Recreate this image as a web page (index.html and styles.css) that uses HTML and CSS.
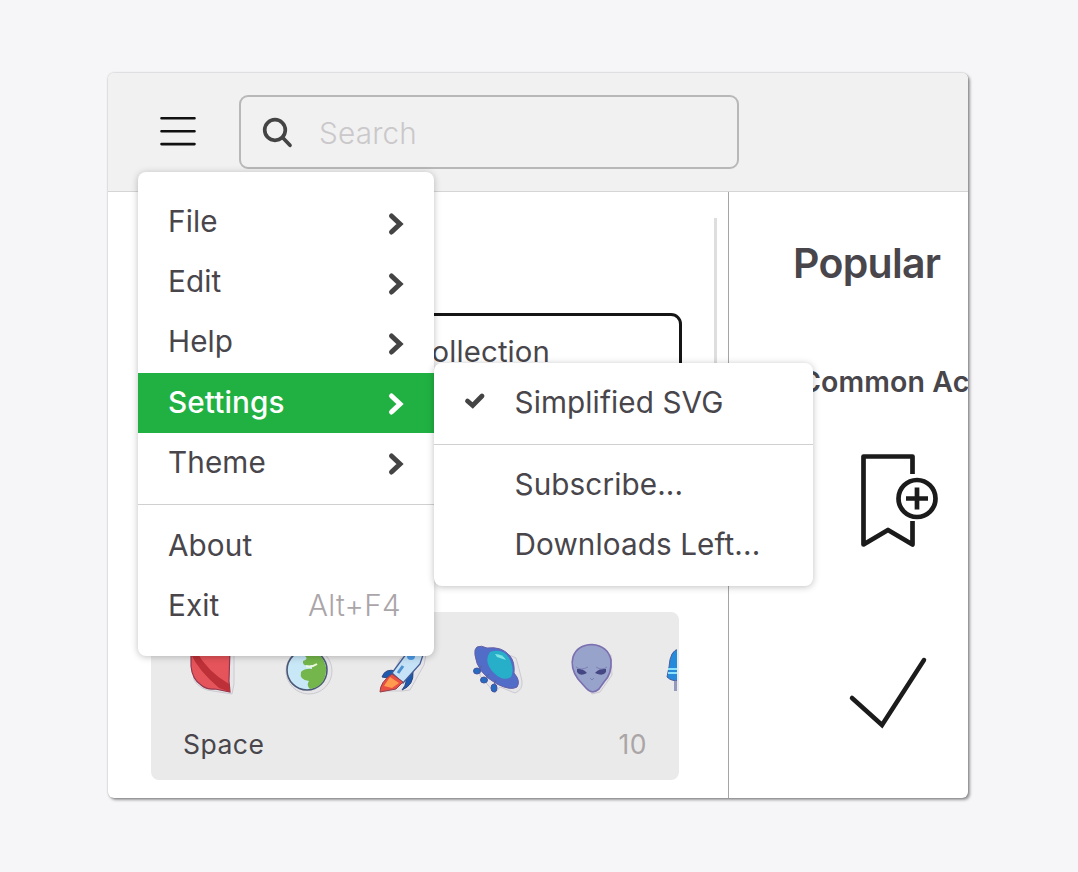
FILE: index.html
```html
<!DOCTYPE html>
<html lang="en">
<head>
<meta charset="utf-8">
<title>Icons</title>
<link rel="stylesheet" href="styles.css">
</head>
<body>
<div class="window">
  <header class="topbar">
    <svg class="burger" viewBox="0 0 36 30"><path d="M1.5 2.2h33M1.5 15.2h33M1.5 28.1h33"/></svg>
    <div class="search">
      <svg class="search-icon" viewBox="0 0 32 32"><circle cx="13" cy="14" r="10.3"/><path d="M20.8 21.800L28 29.300"/></svg>
      <span class="search-text">Search</span>
    </div>
  </header>
  <div class="body">
    <section class="left">
      <div class="collection"><span>Collection</span></div>
      <div class="card">
        <div class="stickers">
          <svg class="sticker" viewBox="0 0 56 56"><path class="halo" d="M8 6V38Q14 48 27 49L46 52L48 42V6Z"/><path d="M5 6V24Q6 37 15 43Q21 48 29 47L44 50L43 39L44 6Z" fill="#e5545a" stroke="#93364d" stroke-width="1.2"/><path d="M5 12Q12 28 33 46L44 50L43 42Q22 30 10 9Z" fill="#bd3038"/></svg>
          <svg class="sticker" viewBox="0 0 56 56"><circle class="halo" cx="28" cy="29" r="23"/><circle cx="26" cy="28" r="20" fill="#c8e8f8" stroke="#4c5877" stroke-width="1.6"/><path d="M20 9Q40 6 45 25Q46 44 29 47Q25 43 28 39Q18 38 20 30Q24 26 31 27L31 23Q21 25 22 19Q28 17 24 14Q18 13 20 9Z" fill="#74b64b"/><path d="M25 24Q30 26 36 22" fill="none" stroke="#edf9df" stroke-width="2"/></svg>
          <svg class="sticker" viewBox="0 0 56 56"><path class="halo" d="M7 49L23 17L51 3L47 23L33 48L25 49Z"/><path d="M19 29Q8 26 5 35L17 37ZM27 34Q32 39 25 48Q37 43 36 30Z" fill="#1d59ad" stroke="#2f477f"/><path d="M15 31L32 8L49 4L43 22L26 41Z" fill="#c5e2f7" stroke="#435c96" stroke-width="1.3"/><path d="M15 32L26 40L19 47L3 50Q3 40 15 32Z" fill="#e84e42" stroke="#953e4d"/><path d="M13 35L22 41L15 46L7 44Z" fill="#ff9a4e"/><circle cx="34" cy="14" r="4" fill="#4b9be7"/><path d="M21 31l5-7" stroke="#4c91d0" stroke-width="3"/></svg>
          <svg class="sticker" viewBox="0 0 56 56"><path class="halo" d="M8 7Q26 7 43 16Q46 26 49 39Q50 48 42 51L27 45L22 51L7 34Z"/><path d="M4 5Q8 3 14 6Q29 4 37 14Q42 20 41 31Q48 39 44 45Q38 49 24 42Q4 31 2 13Q1 7 4 5Z" fill="#526dc8" stroke="#655fa6"/><path d="M17 10Q30 6 36 16Q42 27 38 35Q30 40 21 31Q10 20 17 10Z" fill="#27afc9"/><path d="M22 12Q30 12 33 18L24 15Z" fill="#7ce5e3"/><g fill="#276bc0" stroke="#4453a0"><ellipse cx="4" cy="29" rx="3.5" ry="3"/><ellipse cx="11" cy="38" rx="3.5" ry="3"/><ellipse cx="21" cy="46" rx="3" ry="4"/></g><path d="M5 27l4-3M12 36l4-4M21 43l2-5" stroke="#5a6199"/></svg>
          <svg class="sticker" viewBox="0 0 56 56"><path class="halo" d="M12 8L42 13L43 33L31 50L23 52L11 35Z"/><path d="M23 2.500Q39 4 42 18Q43 32 35 40L30 47Q23 53 17 46L9 37Q1 26 4 15Q8 3 23 2.500Z" fill="#98a3cc" stroke="#7c70b0" stroke-width="1.700"/><path d="M8 27Q13 26 18 31Q11 35 8 30ZM37 27Q31 26 26 31Q34 35 37 30Z" fill="#444784"/><path d="M7 25Q12 29 19 25M27 25Q33 29 38 25M21 36l2 2 2-2" fill="none" stroke="#7b80b2"/></svg>
          <svg class="sticker" viewBox="0 0 56 56"><path d="M14 7Q5 8 4 25L2 35Q7 40 14 38V8Z" fill="#278bdc" stroke="#4c5d9e"/><path d="M3 27h12M3 31h12" stroke="#8be3ff" stroke-width="2"/><path d="M9 39v10h4V39" fill="#9599bd"/></svg>
        </div>
        <div class="card-foot"><span>Space</span><span class="count">10</span></div>
      </div>
      <div class="scrollbar"></div>
    </section>
    <section class="right">
      <h1>Popular</h1>
      <h2>Common Actions</h2>
      <svg class="bookmark" viewBox="0 0 80 96"><path d="M54.500 21V3.500H5.500V91.500L30 77L54.500 91.500V68"/><circle cx="59" cy="45.5" r="18.500"/><path d="M48 45.5H70M59 34.5V56.5"/></svg>
      <svg class="tick" viewBox="0 0 80 74"><path d="M4 42L34 69L76 4"/></svg>
    </section>
  </div>
</div>

<nav class="menu main-menu">
  <div class="item"><span>File</span><svg class="chev" viewBox="0 0 18 24"><path d="M4.500 4L13 12L4.500 20"/></svg></div>
  <div class="item"><span>Edit</span><svg class="chev" viewBox="0 0 18 24"><path d="M4.500 4L13 12L4.500 20"/></svg></div>
  <div class="item"><span>Help</span><svg class="chev" viewBox="0 0 18 24"><path d="M4.500 4L13 12L4.500 20"/></svg></div>
  <div class="item active"><span>Settings</span><svg class="chev" viewBox="0 0 18 24"><path d="M4.500 4L13 12L4.500 20"/></svg></div>
  <div class="item"><span>Theme</span><svg class="chev" viewBox="0 0 18 24"><path d="M4.500 4L13 12L4.500 20"/></svg></div>
  <hr>
  <div class="item"><span>About</span></div>
  <div class="item"><span>Exit</span><span class="key">Alt+F4</span></div>
</nav>
<nav class="menu sub-menu">
  <div class="item"><svg class="check" viewBox="0 0 22 18"><path d="M3.500 9L8.700 13.500L18 4"/></svg><span>Simplified SVG</span></div>
  <hr>
  <div class="item"><span>Subscribe...</span></div>
  <div class="item"><span>Downloads Left...</span></div>
</nav>
</body>
</html>
```
FILE: styles.css
```css
* { box-sizing: border-box; }
body {
  margin: 0;
  height: 872px;
  padding: 73px 108px;
  overflow: hidden;
  background: #f6f6f9;
  color: #48464b;
  font-family: Inter, "Liberation Sans", sans-serif;
  font-size: 29.7px;
}
svg { display: block; fill: none; flex: none; }
span { white-space: nowrap; }

.window {
  width: 860px;
  height: 725px;
  overflow: hidden;
  border-radius: 6px;
  background: #fff;
  box-shadow: 2px 2px 3px rgba(0, 0, 0, .38), 0 0 2px rgba(0, 0, 0, .3);
}
.topbar {
  display: flex;
  height: 119px;
  padding: 22px 0 0 52px;
  background: #f1f1f1;
  border-bottom: 1px solid #d5d5d5;
}
.burger { width: 36px; height: 30px; margin-top: 21px; stroke: #111; stroke-width: 2.6; stroke-linecap: round; }
.search {
  display: flex;
  align-items: center;
  width: 500px;
  height: 74px;
  margin-left: 43px;
  padding-left: 21px;
  border: 2px solid #b9b8b8;
  border-radius: 9px;
}
.search-icon { width: 32px; height: 32px; stroke: #444; stroke-width: 3.7; stroke-linecap: round; }
.search-text { margin: 2px 0 0 25px; color: #cac8ca; font-weight: 300; letter-spacing: .2px; }

.body { display: flex; height: 606px; }
.left {
  position: relative;
  flex: none;
  width: 621px;
  padding: 121px 0 0 43px;
  border-right: 1px solid #a5a5a5;
}
.collection {
  width: 531px;
  height: 220px;
  padding: 18px 0 0 256px;
  border: 3px solid #151515;
  border-radius: 11px;
  font-size: 29.3px;
  letter-spacing: .15px;
  line-height: 36px;
}
.card {
  width: 528px;
  height: 168px;
  margin-top: 79px;
  padding-top: 30px;
  overflow: hidden;
  border-radius: 8px;
  background: #eaeaea;
}
.stickers { display: flex; width: 526px; gap: 39.3px; padding-left: 35px; overflow: hidden; }
.sticker { width: 56px; height: 56px; }
.sticker:nth-child(n+4) { margin-left: 1px; }
.halo { fill: #e6e5e8; stroke: #cbc9d0; stroke-width: 1; }
.card-foot {
  display: flex;
  justify-content: space-between;
  padding: 28px 32px 0 32px;
  font-size: 26.5px;
  letter-spacing: .5px;
  line-height: 36px;
}
.count { color: #aaa5a6; }
.scrollbar { position: absolute; top: 26px; right: 11px; width: 3px; height: 340px; background: #dedddf; }

.right { flex: none; width: 239px; padding: 45px 0 0 64px; overflow: hidden; }
h1, h2 { margin: 0; font-weight: 600; white-space: nowrap; }
h1 { font-size: 41px; letter-spacing: -.7px; line-height: 52px; }
h2 { margin: 74px 0 0 7px; font-size: 28.500px; letter-spacing: .1px; line-height: 38px; }
.bookmark { width: 80px; height: 96px; margin: 52px 0 0 65px; stroke: #1b1b1b; stroke-width: 4.7; stroke-linejoin: round; }
.tick { width: 80px; height: 74px; margin: 107px 0 0 55px; stroke: #1b1b1b; stroke-width: 4.5; stroke-linecap: round; }

.menu {
  position: absolute;
  background: #fff;
  border-radius: 8px;
  box-shadow: 0 1px 7px rgba(0, 0, 0, .25);
}
.main-menu { left: 138px; top: 172px; width: 296px; height: 484px; padding-top: 20.500px; }
.sub-menu { left: 434px; top: 363px; width: 379px; height: 223px; padding-top: 10px; }
.item { display: flex; align-items: center; height: 60.200px; padding: 0 29px 0 30px; }
.item > span { margin-top: -3px; letter-spacing: .1px; }
.main-menu hr ~ .item > span { margin-top: -1px; }
.sub-menu .item { padding-left: 80.5px; }
.sub-menu .item > span { margin-top: -2px; }
.active { background: #20b142; color: #fff; font-weight: 500; letter-spacing: .2px; }
.menu hr { height: 1px; margin: 10.500px 0; border: 0; background: #d0d0d0; }
.chev { width: 18px; height: 24px; margin: 2px 0 0 auto; stroke: #444; stroke-width: 5; stroke-linecap: round; }
.active .chev { stroke: #fff; }
.item > .key { margin-left: auto; padding-right: 4px; color: #aaa5a9; font-weight: 300; letter-spacing: .3px; }
.check { width: 22px; height: 18px; margin: -4px 29px 0 -51px; stroke: #444; stroke-width: 4.8; stroke-linecap: round; }
```
